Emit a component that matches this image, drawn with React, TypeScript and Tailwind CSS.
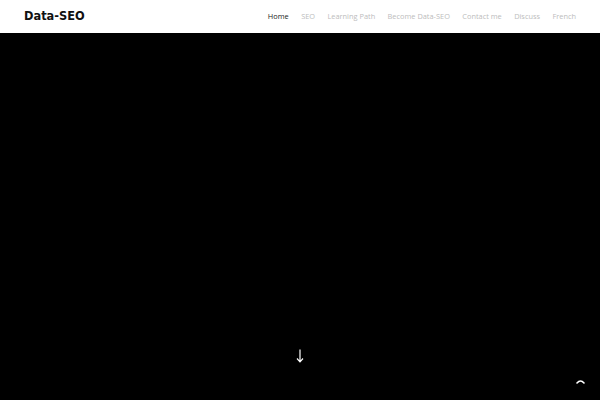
import React from "react";

const links = ["Home", "SEO", "Learning Path", "Become Data-SEO", "Contact me", "Discuss", "French"];

export default function App() {
  return (
    <div className="flex h-[400px] w-[600px] flex-col overflow-hidden bg-black">
      <header className="flex h-[33px] shrink-0 items-center justify-between bg-white pl-[24px] pr-[24px]">
        <a className="text-[11.4px] font-bold text-[#111] font-['DejaVu_Sans',sans-serif]">Data-SEO</a>
        <nav className="flex items-center gap-[12.4px] pt-[1px] text-[7.4px] font-['Open_Sans',sans-serif]">
          {links.map((l, i) => (
            <a key={l} className={i === 0 ? "text-[#222]" : "text-[#bdbdbd]"}>
              {l}
            </a>
          ))}
        </nav>
      </header>
      <main className="relative flex flex-1 flex-col items-center justify-end pb-[37px]">
        {/* scroll-down arrow */}
        <svg width="8" height="14" viewBox="0 0 8 14">
          <path d="M4 0.5 V12.5 M1 9.5 L4 12.8 L7 9.5" stroke="white" strokeWidth="1.2" fill="none" />
        </svg>
        {/* back-to-top */}
        <svg className="absolute bottom-[16px] right-[15px]" width="9" height="5" viewBox="0 0 9 5">
          <path d="M1 4 Q4.5 0 8 4" stroke="white" strokeWidth="1.6" fill="none" strokeLinecap="round" />
        </svg>
      </main>
    </div>
  );
}
